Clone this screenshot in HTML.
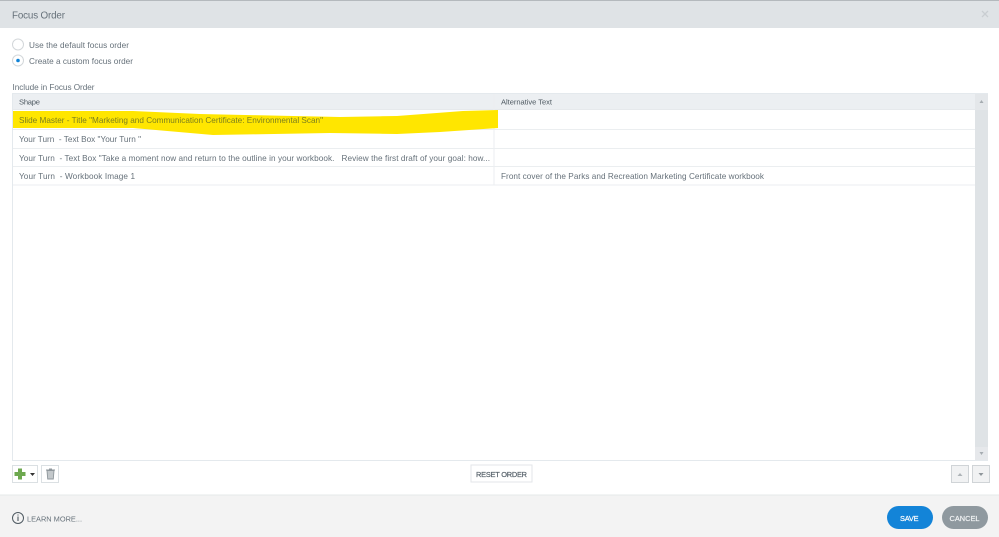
<!DOCTYPE html>
<html><head><meta charset="utf-8"><style>
html,body{margin:0;padding:0;background:#fff;width:999px;height:537px;overflow:hidden}
svg{display:block;filter:blur(.35px)}
text{font-family:"Liberation Sans",sans-serif;font-size:8.2px;fill:#66717a}
</style></head><body>
<svg width="999" height="537" viewBox="0 0 999 537" xmlns="http://www.w3.org/2000/svg">
<rect width="999" height="537" fill="#fff"/>
<!-- Title bar -->
<rect width="999" height="28" fill="#dfe3e6"/>
<rect width="999" height="1" fill="#b4b9bd"/>
<text x="12" y="18.500" style="font-size:9.800px" textLength="53" lengthAdjust="spacing">Focus Order</text>
<path d="M982 11l6 6M988 11l-6 6" stroke="#c9ced2" stroke-width="1.3"/>
<!-- Radios -->
<circle cx="18" cy="44.500" r="5.500" fill="#fff" stroke="#d3d7da"/>
<circle cx="18" cy="60.500" r="5.500" fill="#fff" stroke="#d3d7da"/>
<circle cx="18" cy="60.500" r="1.800" fill="#1183d6"/>
<text x="29" y="48" textLength="100" lengthAdjust="spacing">Use the default focus order</text>
<text x="29" y="64" textLength="104" lengthAdjust="spacing">Create a custom focus order</text>
<text x="12.500" y="90" textLength="82" lengthAdjust="spacing">Include in Focus Order</text>
<!-- Table -->
<rect x="12.500" y="93.500" width="975" height="367" fill="#fff" stroke="#e4e9ed"/>
<rect x="13" y="94" width="962" height="16" fill="#eceff2"/>
<rect x="13" y="109" width="962" height="1" fill="#e6e9ec"/>
<rect x="975" y="94" width="13" height="366" fill="#dfe3e6"/>
<rect x="975" y="94" width="13" height="16" fill="#e4e7ea"/>
<rect x="975" y="447" width="13" height="13" fill="#e6e8eb"/>
<path d="M979.500 103l2-3 2 3z M979.500 452l4 0-2 3z" fill="#a6acb1"/>
<path d="M13 129.500H975M13 148.500H975M13 166.500H975M13 185H975" stroke="#ebeef0"/>
<path d="M494 94V185" stroke="#ebeef0"/>
<text x="19" y="104.500" style="fill:#4f5a62;font-size:7.600px" textLength="21" lengthAdjust="spacing">Shape</text>
<text x="501" y="104.500" style="fill:#4f5a62;font-size:7.600px" textLength="51" lengthAdjust="spacing">Alternative Text</text>
<!-- Highlight -->
<path d="M13 111L133 111L200 114L340 117L397 116L463 111L498 110L498 128L440 132L397 134L330 133L213 135L133 128L13 128Z" fill="#ffe600"/>
<text x="19" y="123" style="fill:#7b7f1e" textLength="304" lengthAdjust="spacing">Slide Master - Title "Marketing and Communication Certificate: Environmental Scan"</text>
<text x="19" y="142" textLength="122" lengthAdjust="spacing" xml:space="preserve">Your Turn  - Text Box "Your Turn "</text>
<text x="19" y="161" textLength="471" lengthAdjust="spacing" xml:space="preserve">Your Turn  - Text Box "Take a moment now and return to the outline in your workbook.   Review the first draft of your goal: how...</text>
<text x="19" y="179" textLength="116" lengthAdjust="spacing" xml:space="preserve">Your Turn  - Workbook Image 1</text>
<text x="501" y="179" textLength="263" lengthAdjust="spacing">Front cover of the Parks and Recreation Marketing Certificate workbook</text>
<!-- Toolbar -->
<rect x="12.500" y="465.500" width="25" height="17" fill="#fff" stroke="#dbe0e3"/>
<path d="M18 468.500h4v3.500h3.500v4H22v3.500h-4V476h-3.500v-4H18z" fill="#6da84f"/>
<path d="M30 473h5l-2.500 3z" fill="#333"/>
<rect x="41.500" y="465.500" width="17" height="17" fill="#fff" stroke="#dbe0e3"/>
<path d="M46 470h9M47 470.500l.7 8.500h5.600l.7-8.500z M49 469h3" fill="#c3c8cb" stroke="#8f979c" stroke-width=".9"/>
<rect x="471" y="465" width="61" height="17" fill="#fff" stroke="#e3e6e9"/>
<text x="476" y="477" style="font-size:7.400px;fill:#56616a;stroke:#56616a;stroke-width:.2" textLength="51" lengthAdjust="spacing">RESET ORDER</text>
<rect x="951.500" y="465.500" width="17" height="17" fill="#f1f2f3" stroke="#d0d4d7"/>
<rect x="972.500" y="465.500" width="17" height="17" fill="#f1f2f3" stroke="#d0d4d7"/>
<path d="M957.500 476l2.500-3 2.500 3z" fill="#aeb3b7"/>
<path d="M978.500 473l2.500 3 2.500-3z" fill="#8f969b"/>
<!-- Footer -->
<rect y="495" width="999" height="42" fill="#f3f3f3"/>
<rect y="494.500" width="999" height="1" fill="#e6e8e9"/>
<circle cx="18" cy="518" r="5.500" fill="none" stroke="#4f5a62" stroke-width="1"/>
<path d="M18 516.500v4.500M18 514.500v1" stroke="#4f5a62" stroke-width="1.100"/>
<text x="27" y="521.500" style="font-size:7.400px" textLength="55" lengthAdjust="spacing">LEARN MORE...</text>
<rect x="887" y="506" width="46" height="23" rx="11.500" fill="#1384d8"/>
<rect x="942" y="506" width="46" height="23" rx="11.500" fill="#8f999f"/>
<text x="900" y="521" style="font-size:7.400px;fill:#fff;stroke:#fff;stroke-width:.2" textLength="18.500" lengthAdjust="spacing">SAVE</text>
<text x="949.500" y="521" style="font-size:7.400px;fill:#f2f4f5;stroke:#f2f4f5;stroke-width:.2" textLength="30" lengthAdjust="spacing">CANCEL</text>
</svg>
</body></html>
